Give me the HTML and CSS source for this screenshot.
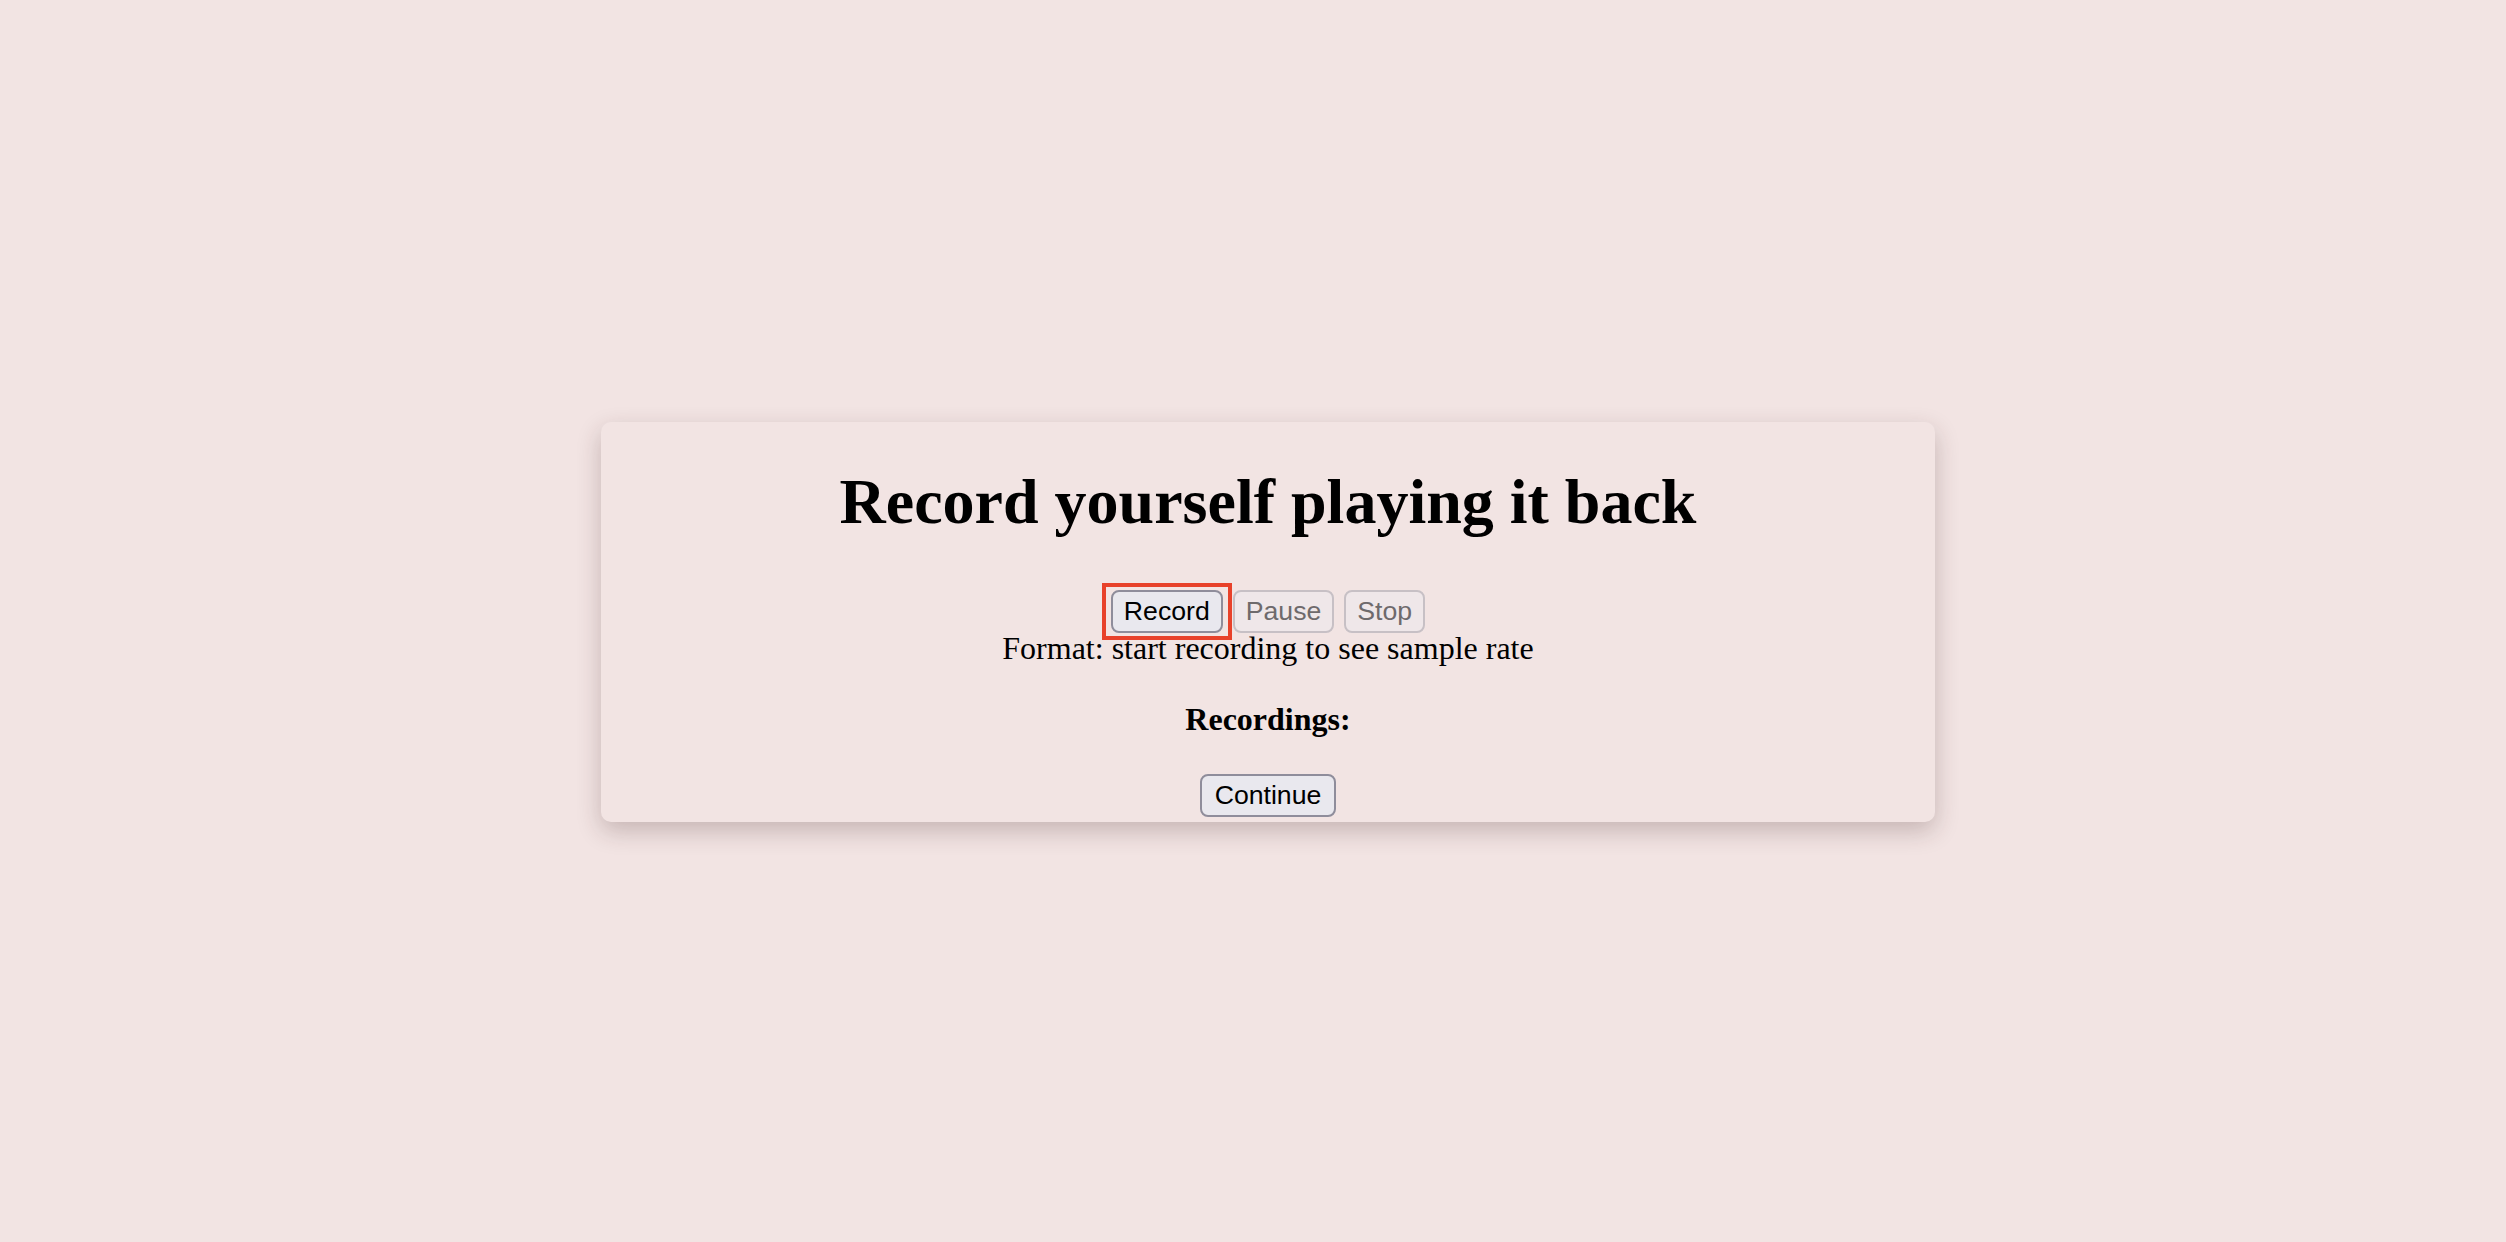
FILE: index.html
```html
<!DOCTYPE html>
<html lang="en">
<head>
<meta charset="utf-8">
<title>Record yourself playing it back</title>
<link rel="stylesheet" href="styles.css">
</head>
<body>
<main class="stage">
  <section class="card">
    <h1 class="title">Record yourself playing it back</h1>
    <div class="controls">
      <button class="btn btn-focus" type="button">Record</button>
      <button class="btn" type="button" disabled>Pause</button>
      <button class="btn" type="button" disabled>Stop</button>
    </div>
    <div class="format">Format: start recording to see sample rate</div>
    <p class="recordings">Recordings:</p>
    <div class="footer">
      <button class="btn btn-wide" type="button">Continue</button>
    </div>
  </section>
</main>
</body>
</html>
```

FILE: styles.css
```css
html, body {
  margin: 0;
  padding: 0;
  background: #f2e4e3;
}

body {
  font-family: "Liberation Serif", "Times New Roman", serif;
  color: #000;
}

.stage {
  min-height: 100vh;
  box-sizing: border-box;
  display: flex;
  align-items: center;
  justify-content: center;
  padding-left: 30px;
  padding-top: 2px;
}

.card {
  width: 1334px;
  display: flow-root;
  background: #f2e4e3;
  border-radius: 10px;
  box-shadow: 0 9px 24px rgba(60, 30, 30, 0.24);
  text-align: center;
}

.title {
  font-size: 64px;
  font-weight: bold;
  line-height: 74px;
  margin: 43px 0 51px;
}

.controls {
  display: flex;
  justify-content: center;
  gap: 10px;
  height: 43px;
}

.btn {
  font-family: "Liberation Sans", Arial, Helvetica, sans-serif;
  font-size: 26.67px;
  line-height: 31px;
  height: 43px;
  box-sizing: border-box;
  padding: 4px 11px;
  color: #000;
  background: #e9e8ee;
  border: 2px solid #8f8d9b;
  border-radius: 8px;
  margin: 0;
}

.btn-wide {
  padding: 4px 13px;
}

.btn:disabled {
  color: #6e6a6c;
  background: #efe7e9;
  border-color: #c7c0c5;
}

.btn-focus {
  position: relative;
}

.btn-focus::after {
  content: "";
  position: absolute;
  left: -11px;
  right: -11px;
  top: -9px;
  bottom: -9px;
  border: 4px solid #e8412a;
  pointer-events: none;
}

.format {
  font-size: 32px;
  line-height: 37px;
  margin-top: -3px;
}

.recordings {
  font-size: 32px;
  font-weight: bold;
  line-height: 37px;
  margin: 34px 0 0;
}

.footer {
  margin-top: 36px;
  padding-bottom: 5px;
  display: flex;
  justify-content: center;
}
```
